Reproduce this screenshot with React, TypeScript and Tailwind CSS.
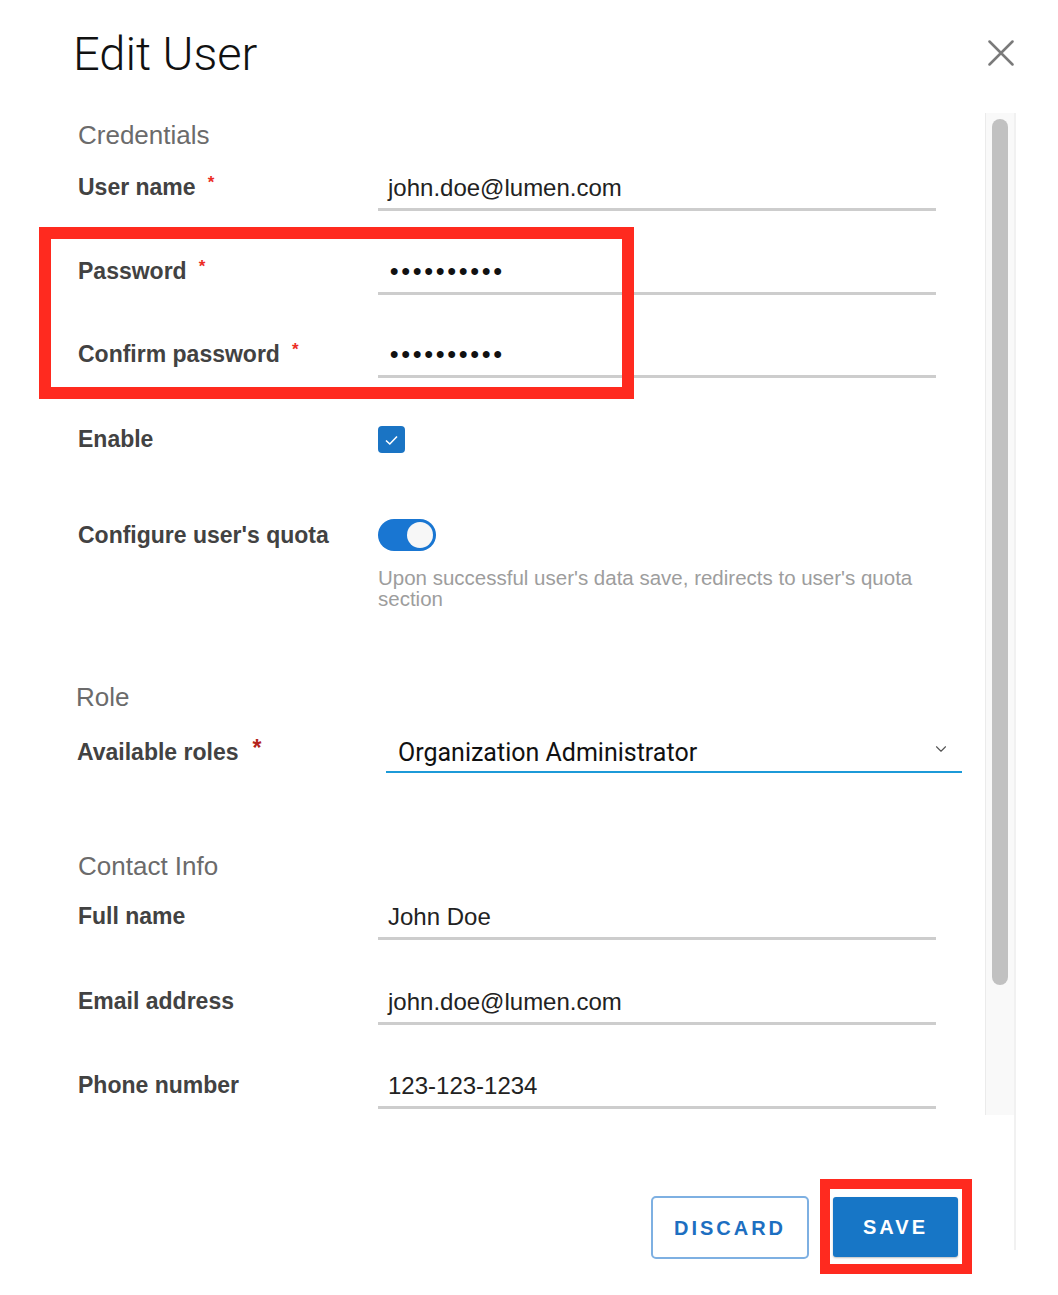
import React from "react";
import { ChevronDown } from "lucide-react";

const labelCls = "w-[300px] shrink-0 flex items-center text-[23px] font-bold text-[#424242] leading-none";

function Req({ dark }: { dark?: boolean }) {
  return dark ? (
    <span className="ml-[14px] -mt-[8px] text-[23px] text-[#b3231b] font-bold">*</span>
  ) : (
    <span className="ml-[12px] -mt-[10px] text-[17px] text-[#ec2d25] font-bold">*</span>
  );
}

function Field({ label, value, req, className }: { label: string; value: React.ReactNode; req?: boolean; className?: string }) {
  return (
    <div className={`flex ${className ?? ""}`}>
      <div className={`${labelCls} h-[41px]`}>
        {label}
        {req && <Req />}
      </div>
      <div className="w-[558px] h-[44px] border-b-[3px] border-[#cdcdcd] flex items-center pl-[10px] text-[24px] text-[#222]">
        {value}
      </div>
    </div>
  );
}

function Dots() {
  return <span className="pl-[2px] tracking-[3.1px] text-[24px] font-bold text-[#111] -mt-[2px]">••••••••••</span>;
}

function SectionTitle({ children, className }: { children: React.ReactNode; className?: string }) {
  return <div className={`h-[30px] leading-[30px] text-[26px] text-[#6b6b6b] ${className ?? ""}`}>{children}</div>;
}

export default function App() {
  return (
    <div className="relative w-[1058px] h-[1295px] bg-white overflow-hidden font-['Liberation_Sans',Arial,sans-serif]">
      {/* header */}
      <div className="h-[113px] flex justify-between items-start">
        <h1 className="ml-[73px] mt-[30px] text-[47px] leading-none font-light text-[#111] font-['Roboto',sans-serif]">Edit User</h1>
        <svg className="mt-[40px] mr-[44px]" width="26" height="26" viewBox="0 0 26 26">
          <path d="M1.5 1.5 L24.5 24.5 M24.5 1.5 L1.5 24.5" stroke="#7a7a7a" strokeWidth="2.5" strokeLinecap="round" />
        </svg>
      </div>

      <div className="w-[1016px] border-r-2 border-[#f1f1f1] flex flex-col">
        <div className="flex h-[1002px] shrink-0">
          {/* scrolling form */}
          <div className="w-[987px] pl-[78px] pt-[7px] flex flex-col">
            <SectionTitle>Credentials</SectionTitle>
            <Field className="mt-[17px]" label="User name" req value="john.doe@lumen.com" />
            <Field className="mt-[40px]" label="Password" req value={<Dots />} />
            <Field className="mt-[39px]" label="Confirm password" req value={<Dots />} />

            <div className="flex mt-[48px] h-[27px]">
              <div className={labelCls}>Enable</div>
              <div className="w-[27px] h-[27px] rounded-[4px] bg-[#1a74c4] flex items-center justify-center">
                <svg width="15" height="12" viewBox="0 0 15 12">
                  <path d="M2 6.5 L5.8 10 L13 2.5" fill="none" stroke="#fff" strokeWidth="1.6" />
                </svg>
              </div>
            </div>

            <div className="flex mt-[66px] h-[32px]">
              <div className={labelCls}>Configure user's quota</div>
              <div className="w-[58px] h-[32px] rounded-full bg-[#1976d2] flex items-center justify-end pr-[3px]">
                <div className="w-[26px] h-[26px] rounded-full bg-[#f7f7f7]" />
              </div>
            </div>
            <div className="ml-[300px] mt-[16px] text-[20.5px] leading-[21px] text-[#9d9d9d]">
              Upon successful user's data save, redirects to user's quota
              <br />
              section
            </div>

            <SectionTitle className="mt-[73px] -ml-[2px]">Role</SectionTitle>
            <div className="flex mt-[17px] -ml-[1px]">
              <div className="w-[309px] shrink-0 flex items-center h-[44px] pt-[2px] text-[23px] font-bold text-[#424242] leading-none">
                Available roles
                <Req dark />
              </div>
              <div className="w-[576px] h-[44px] border-b-2 border-[#1c9ad8] flex items-center justify-between pl-[12px] pr-[12px] pt-[5px] text-[25px] text-[#111] font-['Roboto',sans-serif]">
                Organization Administrator
                <ChevronDown size={18} strokeWidth={1.5} color="#555" className="-mt-[8px]" />
              </div>
            </div>

            <SectionTitle className="mt-[78px]">Contact Info</SectionTitle>
            <Field className="mt-[15px]" label="Full name" value="John Doe" />
            <Field className="mt-[41px]" label="Email address" value="john.doe@lumen.com" />
            <Field className="mt-[40px]" label="Phone number" value="123-123-1234" />
          </div>

          {/* scrollbar */}
          <div className="w-[29px] h-full bg-[#f9f9f9] border-l border-[#ebebeb] pl-[6px] pt-[6px]">
            <div className="w-[16px] h-[866px] rounded-full bg-[#c1c1c1]" />
          </div>
        </div>

        {/* footer */}
        <div className="h-[135px] flex justify-end items-start pr-[42px] pt-[64px]">
          <button className="mt-[17px] w-[158px] h-[63px] rounded-[5px] border-2 border-[#7eb0e2] text-[#1d6fc1] text-[20px] font-bold tracking-[3px]">
            DISCARD
          </button>
          <div className="ml-[11px] shrink-0 border-[10px] border-[#ff2a1f] pt-[8px] pb-[7px] pl-[3px] pr-[4px]">
            <button className="w-[125px] h-[60px] rounded-[3px] bg-[#1776c6] text-white text-[20px] font-bold tracking-[3px] shadow-[0_1px_2px_rgba(0,0,0,0.25)]">
              SAVE
            </button>
          </div>
        </div>
      </div>

      {/* annotation around the password fields */}
      <div className="absolute left-[39px] top-[227px] w-[595px] h-[172px] border-[12px] border-[#ff2a1f]" />
    </div>
  );
}
